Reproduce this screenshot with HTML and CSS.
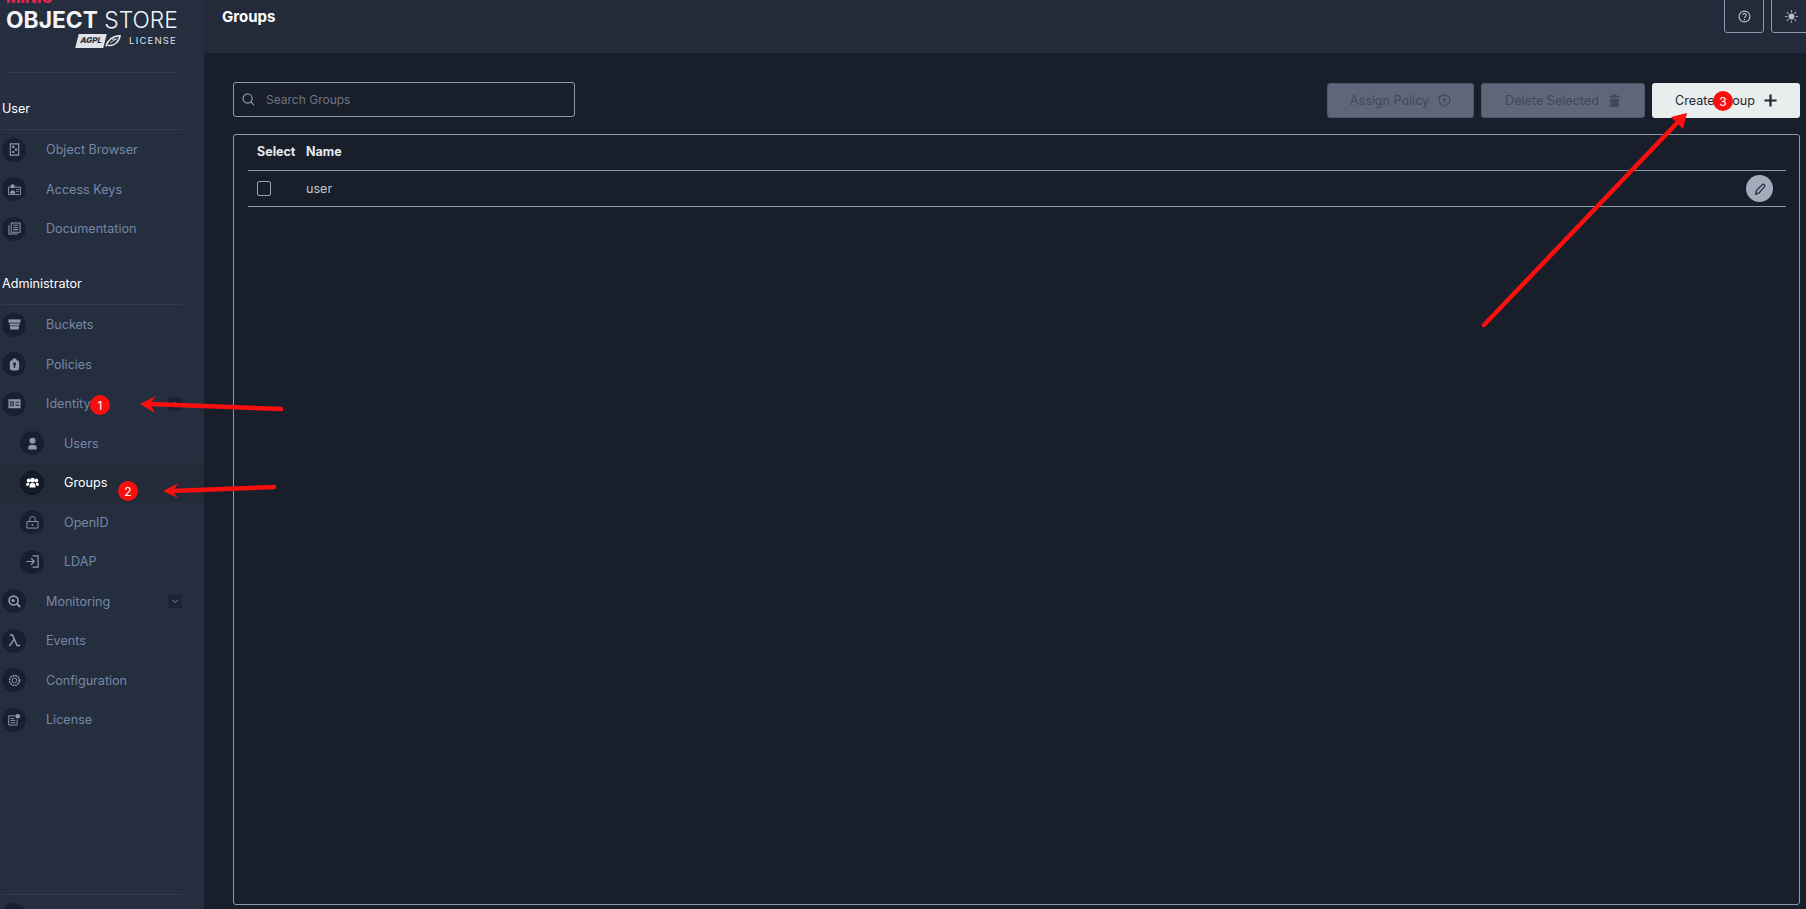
FILE: index.html
```html
<!DOCTYPE html>
<html lang="en">
  <head>
    <meta charset="UTF-8" />
    <title>MinIO Console - Groups</title>
    <link rel="stylesheet" href="styles.css">
  </head>
  <body>
    <div class="page">
      <aside class="sidebar">
        <div class="logo">
          <div class="logo-minio">MINIO</div>
          <div class="logo-title"><b>OBJECT</b> STORE</div>
          <div class="logo-license">
            <span class="agpl">AGPL</span>
            <svg class="agpl-leaf" viewBox="0 0 18 14"><path d="M1 13C3 6 9 1 17 1c-1 7-7 12-14 11" fill="none" stroke="#e8ecf0" stroke-width="1.6"/><path d="M6 9l8-5M8 5h4" stroke="#e8ecf0" stroke-width="1"/></svg>
            <span class="license-word">LICENSE</span>
          </div>
        </div>

        <div class="section-title section-first">User</div>
        <a class="nav-item">
          <span class="nav-icon"><svg viewBox="0 0 14 14"><path d="M2.500 1h9v12h-9z" fill="none" stroke="currentColor" stroke-width="1.200"/><path d="M4.500 3h2.300v2.300H4.500zM7.500 6h2.300v2.300H7.500zM4.500 8.500h2.300v2.300H4.500z" fill="currentColor"/></svg></span>
          <span>Object Browser</span>
        </a>
        <a class="nav-item">
          <span class="nav-icon"><svg viewBox="0 0 14 14"><path d="M.5 4.500h13v8h-13z" fill="none" stroke="currentColor" stroke-width="1"/><circle cx="5" cy="3.500" r="2.200" fill="currentColor"/><path d="M2.500 11c0-3.500 5-3.500 5 0zM8.500 7h3.500M8.500 9h3.500" fill="currentColor" stroke="currentColor" stroke-width=".8"/></svg></span>
          <span>Access Keys</span>
        </a>
        <a class="nav-item">
          <span class="nav-icon"><svg viewBox="0 0 14 14"><path d="M3.500 1h9.500v10H3.500z" fill="none" stroke="currentColor" stroke-width="1.100"/><path d="M1 3.500v9.500h9.500M5.500 3.500h5.500M5.500 5.800h5.500M5.500 8.200h5.500" fill="none" stroke="currentColor" stroke-width="1.100"/></svg></span>
          <span>Documentation</span>
        </a>

        <div class="section-title section-second">Administrator</div>
        <a class="nav-item">
          <span class="nav-icon"><svg viewBox="0 0 14 14"><path d="M.5 1.500h13v3.500H.5z" fill="currentColor"/><path d="M1.500 6h11l-.3 2H1.800zM2 9h10l-.6 3.500H2.600z" fill="currentColor"/></svg></span>
          <span>Buckets</span>
        </a>
        <a class="nav-item">
          <span class="nav-icon"><svg viewBox="0 0 14 14"><path d="M5 .5h4v2h.5A2.500 2.500 0 0 1 12 5v6a2.500 2.500 0 0 1-2.500 2.500h-5A2.500 2.500 0 0 1 2 11V5a2.500 2.500 0 0 1 2.500-2.500H5z" fill="currentColor"/><circle cx="7" cy="6.500" r="1.600" fill="#182030"/><path d="M6.200 7.500h1.600v3H6.200z" fill="#182030"/></svg></span>
          <span>Policies</span>
        </a>
        <a class="nav-item">
          <span class="nav-icon"><svg viewBox="0 0 14 14"><path fill-rule="evenodd" d="M.5 2.500h13v9.500H.5zM2 4.500v5.500h4.500V4.500zM8 5v1.300h4V5zM8 8v1.300h4V8z" fill="currentColor"/><path d="M2.500 5h3.500v4.500H2.500z" fill="currentColor" opacity=".55"/></svg></span>
          <span>Identity</span>
          <span class="nav-toggle"><svg viewBox="0 0 14 14"><path d="M4.500 8l2.500-2.500L9.500 8" fill="none" stroke="currentColor" stroke-width="1"/></svg></span>
        </a>
        <a class="nav-item nav-sub">
          <span class="nav-icon"><svg viewBox="0 0 14 14"><circle cx="7" cy="4" r="3.300" fill="currentColor"/><path d="M2.500 13.500v-2.500a2.500 2.500 0 0 1 2.500-2.500h4a2.500 2.500 0 0 1 2.500 2.500v2.500z" fill="currentColor"/></svg></span>
          <span>Users</span>
        </a>
        <a class="nav-item nav-sub nav-active">
          <span class="nav-icon"><svg viewBox="0 0 14 14"><circle cx="7" cy="4.500" r="2.500"/><circle cx="2.800" cy="4.800" r="2"/><circle cx="11.200" cy="4.800" r="2"/><path d="M3.800 12.500V10a2.500 2.500 0 0 1 2.500-2.500h1.400A2.500 2.500 0 0 1 10.200 10v2.500zM.2 10.500V9A1.800 1.800 0 0 1 2 7.200h1.500L2.800 10.500zM13.800 10.500V9A1.800 1.800 0 0 0 12 7.200h-1.500l.7 3.300z"/></svg></span>
          <span>Groups</span>
        </a>
        <a class="nav-item nav-sub">
          <span class="nav-icon"><svg viewBox="0 0 14 14"><path d="M1 6h12v7H1zM4 6V3.500a3 3 0 0 1 6 0V6" fill="none" stroke="currentColor" stroke-width="1"/><circle cx="7" cy="9.500" r="1" fill="currentColor"/></svg></span>
          <span>OpenID</span>
        </a>
        <a class="nav-item nav-sub">
          <span class="nav-icon"><svg viewBox="0 0 14 14"><path d="M.5 7h8M5.500 3.500L9 7l-3.500 3.500M7 1h6v12H7" fill="none" stroke="currentColor" stroke-width="1.300"/></svg></span>
          <span>LDAP</span>
        </a>
        <a class="nav-item">
          <span class="nav-icon"><svg viewBox="0 0 14 14"><circle cx="6" cy="6" r="4.800" fill="none" stroke="currentColor" stroke-width="1.800"/><circle cx="5.500" cy="6" r="1.800" fill="currentColor"/><path d="M9.500 9.500L13 13" stroke="currentColor" stroke-width="2.200"/></svg></span>
          <span>Monitoring</span>
          <span class="nav-toggle"><svg viewBox="0 0 14 14"><path d="M4.500 6l2.500 2.500L9.500 6" fill="none" stroke="currentColor" stroke-width="1"/></svg></span>
        </a>
        <a class="nav-item">
          <span class="nav-icon"><svg viewBox="0 0 14 14"><path d="M2 1h2.800l5 11.500H13M6.300 6L1.500 13" fill="none" stroke="currentColor" stroke-width="1.600"/></svg></span>
          <span>Events</span>
        </a>
        <a class="nav-item">
          <span class="nav-icon"><svg viewBox="0 0 14 14"><circle cx="7" cy="7" r="5.300" fill="none" stroke="currentColor" stroke-width="1.800" stroke-dasharray="1.800 1"/><circle cx="7" cy="7" r="2.500" fill="none" stroke="currentColor" stroke-width="1"/></svg></span>
          <span>Configuration</span>
        </a>
        <a class="nav-item">
          <span class="nav-icon"><svg viewBox="0 0 14 14"><path d="M8 3H.8v10h9V7" fill="none" stroke="currentColor" stroke-width="1"/><path d="M2.800 6h4M2.800 8h5M2.800 10.500h5" stroke="currentColor" stroke-width="1"/><circle cx="10.500" cy="3.500" r="2.500" fill="currentColor"/></svg></span>
          <span>License</span>
        </a>

        <div class="sidebar-foot">
          <span class="nav-icon"></span>
        </div>
      </aside>

      <main class="main">
        <header class="topbar">
          <h1 class="page-title">Groups</h1>
          <div class="top-actions">
            <button class="top-btn"><svg viewBox="0 0 14 14"><circle cx="7" cy="7" r="5.800" fill="none" stroke="currentColor" stroke-width="1.300"/><path d="M5.200 5.500a1.800 1.800 0 1 1 2.800 1.500c-.7.400-1 .8-1 1.500" fill="none" stroke="currentColor" stroke-width="1.200"/><circle cx="7" cy="10.200" r=".8" fill="currentColor"/></svg></button>
            <button class="top-btn"><svg viewBox="0 0 14 14"><circle cx="7" cy="7" r="3.200" fill="currentColor"/><path d="M7 .2v2.200M7 11.600v2.200M.2 7h2.200M11.600 7h2.200M2.200 2.200l1.600 1.600M10.200 10.200l1.600 1.600M2.200 11.800l1.600-1.600M10.200 3.800l1.600-1.600" stroke="currentColor" stroke-width="1.200"/></svg></button>
          </div>
        </header>

        <section class="content">
          <div class="toolbar">
            <label class="search">
              <svg viewBox="0 0 14 14"><circle cx="6" cy="6" r="4.900" fill="none" stroke="currentColor" stroke-width="1.200"/><path d="M9.500 9.500L13 13" stroke="currentColor" stroke-width="1.200"/></svg>
              <input type="text" placeholder="Search Groups" />
            </label>
            <div class="toolbar-buttons">
              <button class="btn btn-disabled btn-assign">Assign Policy
                <svg viewBox="0 0 14 14"><path d="M7 .8l5.500 2v4c0 3-2.400 5.200-5.500 6.400-3.100-1.200-5.500-3.400-5.500-6.400v-4z" fill="none" stroke="currentColor" stroke-width="1.300"/><circle cx="7" cy="5.800" r="1.500" fill="currentColor"/><path d="M6.300 7h1.400v2.800H6.300z" fill="currentColor"/></svg>
              </button>
              <button class="btn btn-disabled btn-delete">Delete Selected
                <svg viewBox="0 0 14 14"><path d="M1.500 2h11v1.800h-11zM5 .5h4V2H5zM2.500 5h9v9h-9z" fill="currentColor"/></svg>
              </button>
              <button class="btn btn-primary">Create Group
                <svg class="plus" viewBox="0 0 14 14"><path d="M7 .5v13M.5 7h13" stroke="currentColor" stroke-width="2.400"/></svg>
              </button>
            </div>
          </div>

          <div class="table-box">
            <div class="table-row table-head">
              <span class="col-select">Select</span>
              <span>Name</span>
            </div>
            <div class="table-row">
              <span class="col-select"><span class="checkbox"></span></span>
              <span class="cell-name">user</span>
              <button class="edit-btn"><svg viewBox="0 0 14 14"><path d="M10 1.500a2 2 0 0 1 2.500 2.500L6 11.500 2 13l.8-4.200z" fill="none" stroke="currentColor" stroke-width="1.500"/></svg></button>
            </div>
          </div>
        </section>
      </main>
    </div>

    <!-- annotations painted over the screenshot -->
    <svg class="arrows" viewBox="0 0 1806 909">
      <path class="arrow-line" d="M281 409L150 404" />
      <path class="arrow-head" d="M140 404L156 396L150 404L155 413Z" />
      <path class="arrow-line" d="M274 487L172 491" />
      <path class="arrow-head" d="M163 491L179 483L172 491L178 498Z" />
      <path class="arrow-line" d="M1484 325L1678 122" />
      <path class="arrow-head" d="M1687 113L1683 129L1677 123L1671 117Z" />
    </svg>
    <span class="badge badge-one">1</span>
    <span class="badge badge-two">2</span>
    <span class="badge badge-three">3</span>
  </body>
</html>
```

FILE: styles.css
```css
* {
  box-sizing: border-box;
}
body {
  margin: 0;
  background: #181e2a;
  color: #fff;
  font-family: Inter, "Noto Sans", sans-serif;
  font-size: 12.6px;
  overflow: hidden;
}
svg {
  display: block;
}
.page {
  display: flex;
  height: 909px;
  overflow: hidden;
}

/* sidebar */
.sidebar {
  flex: none;
  display: flex;
  flex-direction: column;
  width: 204px;
  height: 909px;
  overflow: hidden;
  background: #252e3e;
}
.logo {
  flex: none;
  height: 73px;
  margin: 0 27px 0 6px;
  border-bottom: 1px solid #343d4e;
  overflow: hidden;
}
.logo-minio {
  height: 9px;
  margin-top: -7px;
  color: #e0264f;
  font-size: 15.5px;
  font-weight: 800;
  line-height: 10px;
}
.logo-title {
  height: 22px;
  margin-top: 7px;
  color: #f1f3f5;
  font-size: 22.8px;
  font-weight: 300;
  line-height: 22px;
  white-space: nowrap;
}
.logo-title b {
  font-weight: 700;
}
.logo-license {
  display: flex;
  align-items: center;
  justify-content: flex-end;
  height: 15px;
  margin-top: 2px;
}
.agpl {
  width: 28px;
  height: 14px;
  background: #dfe3e8;
  color: #252e3e;
  font-size: 8px;
  font-weight: 800;
  line-height: 13px;
  text-align: center;
  transform: skewX(-14deg);
}
.agpl-leaf {
  width: 16px;
  height: 14px;
  margin-right: 8px;
}
.license-word {
  color: #dfe3e8;
  font-size: 9.5px;
  letter-spacing: 1.2px;
}
.section-title {
  flex: none;
  width: 180px;
  margin-left: 2px;
  padding-top: 0.5px;
  padding-bottom: 10.5px;
  border-bottom: 1px solid #343d4e;
  line-height: 20px;
}
.section-first {
  margin-top: 25px;
}
.section-second {
  margin-top: 24.5px;
}
.nav-item {
  flex: none;
  display: flex;
  align-items: center;
  gap: 20px;
  height: 39.5px;
  padding-left: 2px;
  color: #7587a8;
}
.nav-sub {
  padding-left: 20px;
}
.nav-active {
  background: #232a38;
  color: #fff;
}
.nav-icon {
  flex: none;
  display: flex;
  align-items: center;
  justify-content: center;
  width: 24px;
  height: 24px;
  border-radius: 50%;
  background: #182030;
  color: #8e99ae;
}
.nav-icon svg {
  width: 13px;
  height: 13px;
}
.nav-active .nav-icon {
  background: #141a26;
  border: 1px solid #0f1420;
  color: #fff;
  fill: #fff;
}
.nav-toggle {
  display: flex;
  align-items: center;
  justify-content: center;
  width: 14px;
  height: 14px;
  margin-left: auto;
  margin-right: 22px;
  border-radius: 2px;
  background: #1c2433;
  color: #7587a8;
}
.nav-toggle svg {
  width: 14px;
  height: 14px;
}
.sidebar-foot {
  flex: none;
  height: 40px;
  width: 180px;
  margin: auto 0 -25px 2px;
  padding-top: 8px;
  border-top: 1px solid #343d4e;
}

/* main */
.main {
  flex: 1;
  display: flex;
  flex-direction: column;
  min-width: 0;
}
.topbar {
  flex: none;
  display: flex;
  align-items: flex-start;
  justify-content: space-between;
  height: 53px;
  padding-left: 18px;
  overflow: hidden;
  background: #232b3a;
}
.page-title {
  margin: 7px 0 0;
  font-size: 15px;
  font-weight: 700;
  line-height: 19px;
}
.top-actions {
  flex: none;
  display: flex;
  gap: 7px;
  margin-top: -7px;
  margin-right: -5px;
}
.top-btn {
  display: flex;
  align-items: center;
  justify-content: center;
  width: 40px;
  height: 40px;
  padding: 7px 0 0;
  border: 1px solid #8e99ae;
  border-radius: 3px;
  background: transparent;
  color: #b4bcc9;
}
.top-btn svg {
  width: 13px;
  height: 13px;
}
.content {
  flex: 1;
  display: flex;
  flex-direction: column;
  min-height: 0;
  padding: 29px 6px 4px 29px;
}
.toolbar {
  flex: none;
  display: flex;
  justify-content: space-between;
  height: 36px;
  margin-bottom: 16px;
}
.search {
  display: flex;
  align-items: center;
  gap: 11px;
  width: 342px;
  height: 35px;
  padding-left: 8px;
  border: 1px solid #8e99ae;
  border-radius: 3px;
  color: #98a2b3;
}
.search svg {
  width: 13px;
  height: 13px;
}
.search input {
  flex: 1;
  min-width: 0;
  padding: 0;
  border: none;
  outline: none;
  background: transparent;
  color: #fff;
  font-family: inherit;
  font-size: 12px;
}
.search input::placeholder {
  color: #71757e;
}
.toolbar-buttons {
  display: flex;
  gap: 7px;
  margin-top: 1px;
}
.btn {
  display: flex;
  align-items: center;
  justify-content: center;
  gap: 9px;
  height: 35px;
  border: 1px solid transparent;
  border-radius: 3px;
  font-family: inherit;
  font-size: 12.6px;
}
.btn svg {
  width: 13px;
  height: 13px;
}
.btn-disabled {
  background: #5e6779;
  border-color: #4e5667;
  color: #414857;
}
.btn-assign {
  width: 147px;
}
.btn-delete {
  width: 164px;
}
.btn-primary {
  width: 148px;
  background: #e8edee;
  color: #1f2736;
}
.table-box {
  flex: 1;
  min-height: 0;
  padding: 0 13px 0 14px;
  border: 1px solid #8e99ae;
  border-radius: 3px;
}
.table-row {
  display: flex;
  align-items: center;
  height: 36px;
  border-bottom: 1px solid #8e99ae;
  color: #c4c9d2;
}
.table-head {
  padding-bottom: 2px;
  color: #e6e9ee;
  font-weight: 700;
  font-size: 12.5px;
}
.col-select {
  flex: none;
  width: 58px;
  padding-left: 9px;
}
.checkbox {
  display: block;
  width: 14px;
  height: 15px;
  border: 1px solid #9aa3b2;
  border-radius: 2px;
}
.cell-name {
  flex: 1;
}
.edit-btn {
  display: flex;
  align-items: center;
  justify-content: center;
  width: 27px;
  height: 27px;
  margin-right: 13px;
  padding: 0;
  border: none;
  border-radius: 50%;
  background: #a2acbd;
  color: #2a3242;
}
.edit-btn svg {
  width: 12px;
  height: 12px;
}

/* annotations */
.arrows {
  position: absolute;
  top: 0;
  left: 0;
  width: 1806px;
  height: 909px;
  pointer-events: none;
}
.arrow-line {
  fill: none;
  stroke: #fa0f0f;
  stroke-width: 4.5;
  stroke-linecap: round;
}
.arrow-head {
  fill: #fa0f0f;
}
.badge {
  position: absolute;
  display: flex;
  align-items: center;
  justify-content: center;
  width: 20px;
  height: 20px;
  border-radius: 50%;
  background: #fa0f0f;
  color: #fff;
  font-size: 12px;
}
.badge-one {
  top: 395px;
  left: 90px;
}
.badge-two {
  top: 481px;
  left: 118px;
}
.badge-three {
  top: 91px;
  left: 1713px;
}
```
